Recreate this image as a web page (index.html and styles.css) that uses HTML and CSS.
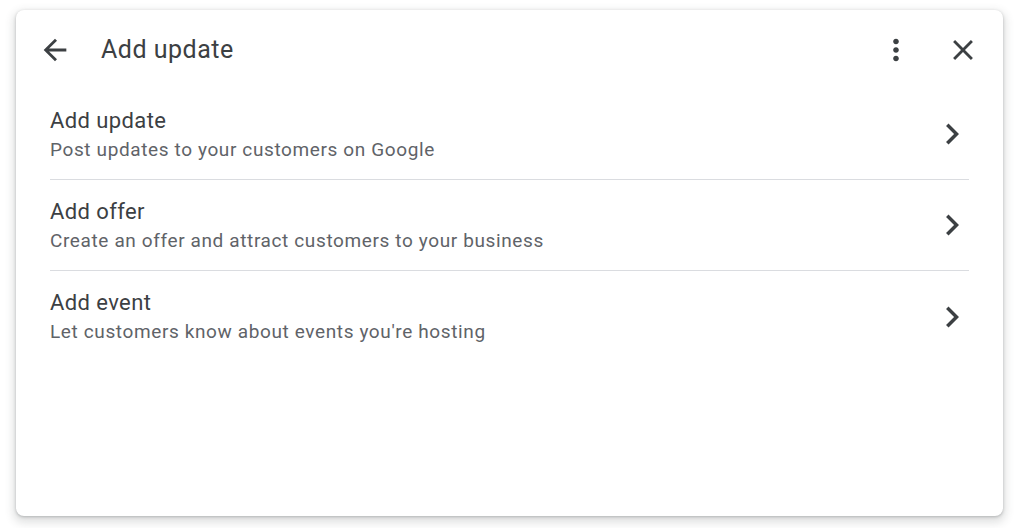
FILE: index.html
```html
<!DOCTYPE html>
<html>
<head>
<meta charset="utf-8">
<link rel="stylesheet" href="styles.css">
</head>
<body>
<div class="card">
  <div class="header">
    <button class="icon-btn back" aria-label="Back">
      <svg width="34" height="34" viewBox="0 0 24 24"><path d="M20 11H7.83l5.59-5.59L12 4l-8 8 8 8 1.41-1.41L7.83 13H20v-2z" fill="#3c4043"/></svg>
    </button>
    <div class="title">Add update</div>
    <div class="spacer"></div>
    <button class="icon-btn" aria-label="More">
      <svg width="34" height="34" viewBox="0 0 24 24"><path d="M12 8c1.1 0 2-.9 2-2s-.9-2-2-2-2 .9-2 2 .9 2 2 2zm0 2c-1.1 0-2 .9-2 2s.9 2 2 2 2-.9 2-2-.9-2-2-2zm0 6c-1.1 0-2 .9-2 2s.9 2 2 2 2-.9 2-2-.9-2-2-2z" fill="#3c4043"/></svg>
    </button>
    <button class="icon-btn close" aria-label="Close">
      <svg width="34" height="34" viewBox="0 0 24 24"><path d="M19 6.41L17.59 5 12 10.59 6.41 5 5 6.41 10.59 12 5 17.59 6.41 19 12 13.41 17.59 19 19 17.59 13.41 12z" fill="#3c4043"/></svg>
    </button>
  </div>
  <div class="list">
    <div class="item">
      <div class="text">
        <div class="item-title">Add update</div>
        <div class="item-sub">Post updates to your customers on Google</div>
      </div>
      <svg class="chev" width="42" height="42" viewBox="0 0 24 24"><path d="M10 6L8.59 7.41 13.17 12l-4.58 4.59L10 18l6-6z" fill="#3c4043"/></svg>
    </div>
    <div class="item">
      <div class="text">
        <div class="item-title">Add offer</div>
        <div class="item-sub">Create an offer and attract customers to your business</div>
      </div>
      <svg class="chev" width="42" height="42" viewBox="0 0 24 24"><path d="M10 6L8.59 7.41 13.17 12l-4.58 4.59L10 18l6-6z" fill="#3c4043"/></svg>
    </div>
    <div class="item last">
      <div class="text">
        <div class="item-title">Add event</div>
        <div class="item-sub">Let customers know about events you're hosting</div>
      </div>
      <svg class="chev" width="42" height="42" viewBox="0 0 24 24"><path d="M10 6L8.59 7.41 13.17 12l-4.58 4.59L10 18l6-6z" fill="#3c4043"/></svg>
    </div>
  </div>
</div>
</body>
</html>
```

FILE: styles.css
```css
html, body {
  margin: 0;
  padding: 0;
  background: #ffffff;
}
body {
  padding: 10px 21px 12px 16px;
  font-family: Roboto, "Noto Sans", Arial, sans-serif;
  color: #3c4043;
}
.card {
  height: 506px;
  background: #fff;
  border-radius: 8px;
  box-shadow: 0 1px 3px rgba(60,64,67,.3), 0 4px 8px 3px rgba(60,64,67,.15);
  box-sizing: border-box;
}
.header {
  display: flex;
  align-items: center;
  height: 79px;
  padding: 0 23px 0 22px;
}
.icon-btn {
  border: 0;
  background: none;
  padding: 0;
  width: 34px;
  height: 34px;
  display: flex;
  align-items: center;
  justify-content: center;
}
.title {
  margin-left: 29px;
  font-size: 25px;
  color: #3c4043;
  letter-spacing: .5px;
}
.spacer { flex: 1; }
.close { margin-left: 33px; }
.list {
  padding: 0 34px;
}
.item {
  display: flex;
  align-items: center;
  height: 91px;
  border-bottom: 1px solid #dadce0;
  box-sizing: border-box;
}
.item.last { border-bottom: 0; }
.text { flex: 1; padding-top: 1px; }
.item-title {
  font-size: 22px;
  color: #3c4043;
  line-height: 28px;
  letter-spacing: .4px;
}
.item-sub {
  font-size: 19px;
  color: #5f6368;
  line-height: 27px;
  margin-top: 1px;
  letter-spacing: .62px;
}
.chev { margin-right: -4px; }
```
